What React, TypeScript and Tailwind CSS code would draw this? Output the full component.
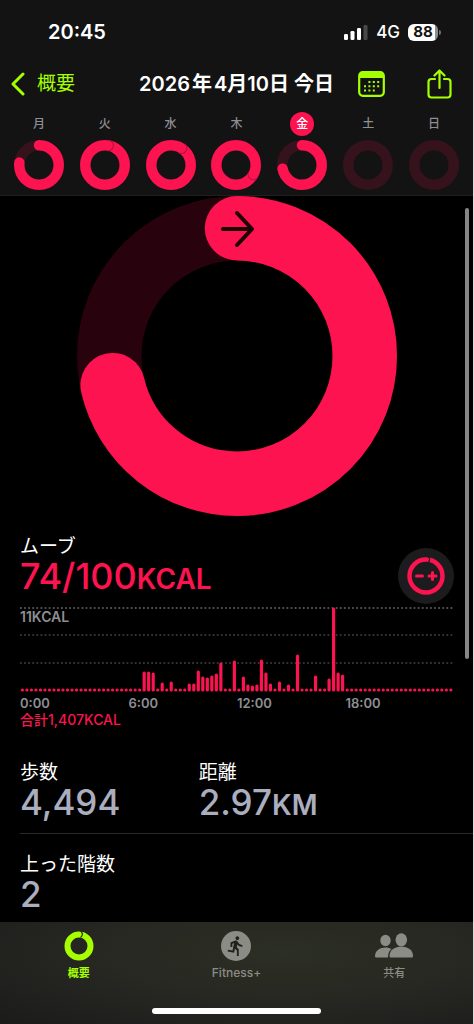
import { MdDirectionsRun } from 'react-icons/md'

const days = [
  { name: '月', value: 0.765 },
  { name: '火', value: 1.025 },
  { name: '水', value: 1.09 },
  { name: '木', value: 1.33 },
  { name: '金', value: 0.715, selected: true },
  { name: '土', value: 0 },
  { name: '日', value: 0 },
]

// calories for every 15 minutes, as bar heights
const bars: number[] = [
  ...Array(27).fill(3),
  20, 20, 19, 3, 9, 3, 10, 3, 3, 3, 8, 8, 21, 15, 14, 16, 18, 29, 3, 3, 31,
  3, 15, 7, 6, 7, 32, 19, 8, 3, 10, 3, 7, 3, 37, 3, 3, 3, 16, 3, 3, 13, 84, 19, 17,
  ...Array(24).fill(3),
]

type RingProps = { value: number; radius: number; stroke: number; track: string }

const Ring = ({ value, radius, stroke, track }: RingProps) => {
  const c = radius + stroke / 2
  const length = 2 * Math.PI * radius
  const cap = stroke / 2
  return (
    <g transform={`rotate(-90 ${c} ${c})`} fill="none">
      <circle cx={c} cy={c} r={radius} stroke={track} strokeWidth={stroke} />
      {value > 0 && (
        <circle
          cx={c}
          cy={c}
          r={radius}
          stroke="#fc134f"
          strokeWidth={stroke}
          strokeLinecap="round"
          strokeDasharray={value < 1 ? `${value * length} ${length}` : undefined}
        />
      )}
      {value > 1 && (
        <path
          d={`M${c + radius - cap} ${c} a${cap} ${cap} 0 0 0 ${stroke} 0`}
          transform={`rotate(${(value - 1) * 360} ${c} ${c})`}
          stroke="#b80f3e"
          strokeWidth="1"
        />
      )}
    </g>
  )
}

const StatusBar = () => (
  <div className="flex h-16 items-center justify-between pl-12 pr-8">
    <span className="text-[20px] font-semibold leading-6">20:45</span>
    <div className="flex items-center">
      <svg className="mr-2" width="24" height="16" viewBox="0 0 24 16" fill="#fff">
        <rect x="0" y="10" width="4" height="6" rx="1.3" />
        <rect x="6.5" y="7" width="4" height="9" rx="1.3" />
        <rect x="13" y="4" width="4" height="12" rx="1.3" />
        <rect x="19.5" y="1" width="4" height="15" rx="1.3" fill="#48484a" />
      </svg>
      <span className="mr-2 text-[17px] font-medium leading-6">4G</span>
      <div className="flex items-center">
        <span className="flex h-[17px] w-[30px] items-center justify-center rounded-md bg-linear-to-r from-white from-90% to-[#8e8e8e] to-90% text-[15px] font-bold text-[#131313]">
          88
        </span>
        <span className="ml-px h-[5px] w-[2px] rounded-r-sm bg-[#6e6e6e]" />
      </div>
    </div>
  </div>
)

const NavBar = () => (
  <div className="grid h-10 grid-cols-[1fr_auto_1fr] items-center px-2.5">
    <button className="flex items-center gap-3 text-[19px] leading-6 text-[#a6ff00]">
      <svg width="15" height="24" viewBox="0 0 15 24" fill="none" stroke="currentColor" strokeWidth="3" strokeLinecap="round" strokeLinejoin="round">
        <path d="M13 2 3 12l10 10" />
      </svg>
      概要
    </button>
    <h1 className="text-[20px] font-semibold leading-6">
      2026<span className="mx-0.5">年</span>4月10日 今日
    </h1>
    <div className="flex items-center justify-between pl-6 pr-[11px] text-[#a6ff00]">
      <button aria-label="カレンダー">
        <svg width="27" height="26" viewBox="0 0 27 26" fill="none">
          <rect x="1.2" y="1.2" width="24.6" height="23.6" rx="3.5" stroke="currentColor" strokeWidth="2.2" />
          <path d="M1 7V4a3 3 0 0 1 3-3h19a3 3 0 0 1 3 3v3z" fill="currentColor" />
          <path d="M10.4 11h12M6 15.200h16M6 19.400h11" stroke="currentColor" strokeWidth="2" strokeDasharray="2 2.4" />
        </svg>
      </button>
      <button aria-label="共有">
        <svg width="25" height="30" viewBox="0 0 25 30" fill="none" stroke="currentColor" strokeWidth="2.2" strokeLinecap="round" strokeLinejoin="round">
          <path d="M8 10H4.500a3 3 0 0 0-3 3v12.500a3 3 0 0 0 3 3h16a3 3 0 0 0 3-3V13a3 3 0 0 0-3-3H17" />
          <path d="M12.500 19V2M7.500 6.500l5-5 5 5" />
        </svg>
      </button>
    </div>
  </div>
)

const Week = () => (
  <div className="grid grid-cols-7 px-1.5 pb-[5px] pt-2">
    {days.map((day) => (
      <button key={day.name} className="flex flex-col items-center gap-1">
        <span
          className={
            'flex h-6 w-6 items-center justify-center rounded-full text-[12px] font-medium ' +
            (day.selected ? 'bg-[#fc134f] text-white' : 'text-[#8e8e93]')
          }
        >
          {day.name}
        </span>
        <svg width="50" height="50" viewBox="0 0 50 50">
          <Ring value={day.value} radius={19.75} stroke={10.5} track="#36121c" />
        </svg>
      </button>
    ))}
  </div>
)

const Chart = () => (
  <div className="relative">
    <svg className="block w-full" viewBox="0 0 434 88">
      {[4, 31, 59].map((y, i) => (
        <path key={y} d={`M0 ${y}H434`} stroke={i === 0 ? '#6a6a6a' : '#444'} strokeWidth="1.300" strokeDasharray="1.800 2.300" />
      ))}
      {bars.map((h, i) => (
        <rect key={i} x={0.8 + i * 4.51} y={87.5 - h} width="3.200" height={h} rx="1.500" fill="#fc134f" />
      ))}
    </svg>
    <span className="absolute left-0 top-1 text-[14px] font-semibold leading-[18px] text-[#8e8e93]">11KCAL</span>
    <div className="mt-[3px] grid grid-cols-4 text-[13px] font-semibold leading-4 text-[#8e8e93]">
      <span>0:00</span>
      <span>6:00</span>
      <span>12:00</span>
      <span>18:00</span>
    </div>
    <p className="text-[14px] font-medium leading-[17px] text-[#fc134f]">合計1,407KCAL</p>
  </div>
)

const Stat = ({ label, value, unit }: { label: string; value: string; unit?: string }) => (
  <div>
    <h2 className="text-[19px] leading-[22px]">{label}</h2>
    <p className="text-[35px] font-medium leading-9 text-[#aaaebf]">
      {value}
      {unit && <span className="text-[28px] font-semibold leading-none">{unit}</span>}
    </p>
  </div>
)

const TabBar = () => (
  <nav className="bg-[radial-gradient(ellipse_at_60%_30%,#2c2f24_0%,#272822_45%,#1b1b1b_100%)] pb-2.5">
    <div className="grid grid-cols-3 text-[11px] font-medium leading-4 text-[#8b8c86]">
      <button className="flex flex-col items-center gap-1 pt-[9px] font-bold text-[#a6ff00]">
        <svg width="30" height="30" viewBox="0 0 30 30" fill="none">
          <circle cx="15" cy="15" r="11.500" stroke="currentColor" strokeWidth="6" />
          <path d="M16.500 0c2.500 1.500 2.500 5 0 6.500" stroke="#23261c" strokeWidth="1.200" />
        </svg>
        概要
      </button>
      <button className="flex flex-col items-center gap-1 pt-[9px] text-[12px]">
        <span className="flex h-[30px] w-[30px] items-center justify-center rounded-full bg-[#8b8c86] text-[#20221c]">
          <MdDirectionsRun size={22} />
        </span>
        Fitness+
      </button>
      <button className="flex flex-col items-center gap-1 pt-[9px]">
        <svg width="40" height="30" viewBox="0 0 40 30" fill="currentColor">
          <ellipse cx="11.500" cy="9.500" rx="5.200" ry="5.800" />
          <path d="M1 25.500c0-6 5-9 10.500-9 2.500 0 4.500.6 6 1.600-2.500 2-3.500 4.600-3.500 8.400H2.500A1.300 1.300 0 0 1 1 25.500z" />
          <ellipse cx="27.300" cy="8.800" rx="5.800" ry="6.500" />
          <path d="M15.500 25c0-6 5.500-9.500 11.800-9.500S39 19 39 25c0 1-.6 1.500-1.500 1.500H17c-.9 0-1.500-.5-1.500-1.500z" />
        </svg>
        共有
      </button>
    </div>
    <div className="mx-auto mt-[27px] h-1.5 w-[169px] rounded-full bg-white" />
  </nav>
)

export default function App() {
  return (
    <div className="flex min-h-screen flex-col border-r border-[#dcdcdc] bg-black font-['Inter','Noto_Sans_CJK_JP',sans-serif] text-white">
      <header className="border-b border-[#1f1f1f] bg-[#131313]">
        <StatusBar />
        <NavBar />
        <Week />
      </header>

      <main className="relative flex-1">
        <svg className="mx-auto block" width="320" height="320" viewBox="0 0 320 320">
          <Ring value={0.713} radius={127.75} stroke={64.5} track="#28020c" />
          <path d="M146 33h29M160 17l15 16-15 16" fill="none" stroke="#1c0006" strokeWidth="4" strokeLinecap="round" strokeLinejoin="round" />
        </svg>

        <section className="pl-5 pr-[19px] pt-5">
          <div className="flex items-end justify-between">
            <div className="pb-2.5">
              <h2 className="text-[19px] leading-[22px]">ムーブ</h2>
              <p className="text-[36px] font-medium leading-9 text-[#fc134f]">
                74/100<span className="text-[28px] font-semibold leading-none">KCAL</span>
              </p>
            </div>
            <button aria-label="ゴールを変更" className="flex h-14 w-14 items-center justify-center rounded-full bg-[#1c1c1e]">
              <svg width="38" height="38" viewBox="0 0 38 38" fill="none" stroke="#fc134f" strokeLinecap="round">
                <circle cx="19" cy="19" r="16.500" strokeWidth="4.500" />
                <path d="M9.500 19h6M22 19h7M25.500 15.500v7" strokeWidth="3" />
                <path d="M21.500 0c1.500 1.500 1.500 3.500 0 5" stroke="#1c1c1e" strokeWidth="1.200" />
              </svg>
            </button>
          </div>
          <Chart />
        </section>

        <section className="pl-5 pt-[34px]">
          <div className="grid grid-cols-[7fr_10fr] border-b border-[#2a2a2c] pb-[13px] pr-[19px]">
            <Stat label="歩数" value="4,494" />
            <Stat label="距離" value="2.97" unit="KM" />
          </div>
          <div className="pb-2 pt-5">
            <Stat label="上った階数" value="2" />
          </div>
        </section>

        {/* scroll indicator */}
        <div className="absolute right-1 top-3 h-[451px] w-1 rounded-full bg-[#868686]" />
      </main>

      <TabBar />
    </div>
  )
}
